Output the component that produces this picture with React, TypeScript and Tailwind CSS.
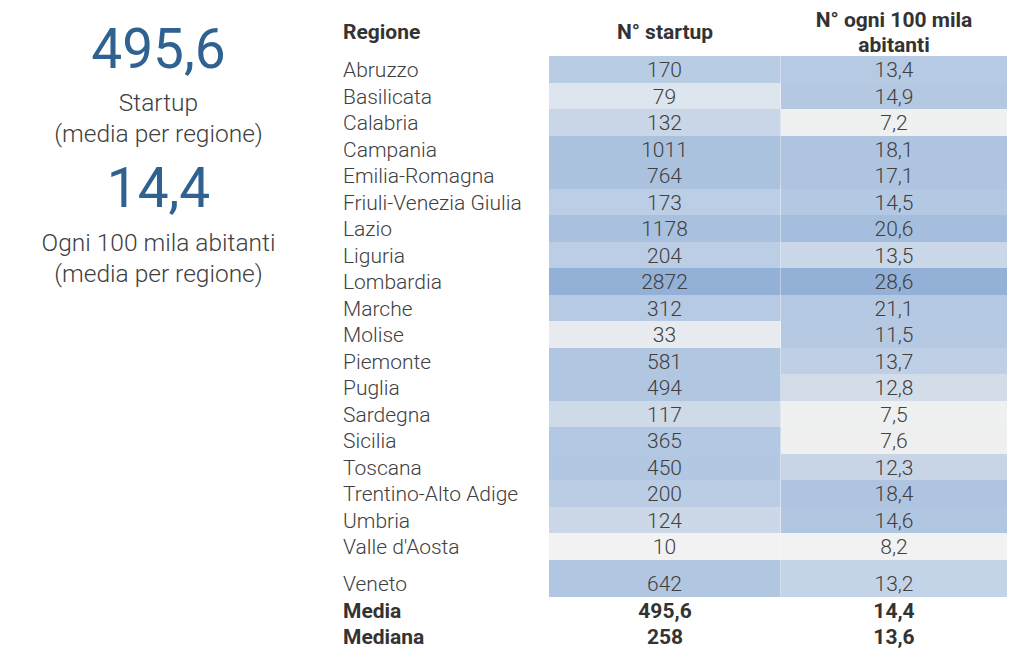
import React from 'react';

// regione, startup, colore startup, per 100 mila, colore per 100 mila
interface Riga {
  nome: string;
  startup: string;
  c1: string;
  ogni: string;
  c2: string;
}

const righe: Riga[] = [
  { nome: 'Abruzzo', startup: '170', c1: 'bg-[#b8cce4]', ogni: '13,4', c2: 'bg-[#b6cae3]' },
  { nome: 'Basilicata', startup: '79', c1: 'bg-[#dde5ef]', ogni: '14,9', c2: 'bg-[#b4c8e2]' },
  { nome: 'Calabria', startup: '132', c1: 'bg-[#c8d6e8]', ogni: '7,2', c2: 'bg-[#eff0f0]' },
  { nome: 'Campania', startup: '1011', c1: 'bg-[#abc2df]', ogni: '18,1', c2: 'bg-[#aec4e0]' },
  { nome: 'Emilia-Romagna', startup: '764', c1: 'bg-[#abc2df]', ogni: '17,1', c2: 'bg-[#aec4e0]' },
  { nome: 'Friuli-Venezia Giulia', startup: '173', c1: 'bg-[#bccee5]', ogni: '14,5', c2: 'bg-[#b3c8e2]' },
  { nome: 'Lazio', startup: '1178', c1: 'bg-[#a9c0de]', ogni: '20,6', c2: 'bg-[#a6bedd]' },
  { nome: 'Liguria', startup: '204', c1: 'bg-[#bccee5]', ogni: '13,5', c2: 'bg-[#cad7e8]' },
  { nome: 'Lombardia', startup: '2872', c1: 'bg-[#93b0d6]', ogni: '28,6', c2: 'bg-[#93b0d6]' },
  { nome: 'Marche', startup: '312', c1: 'bg-[#b6cae3]', ogni: '21,1', c2: 'bg-[#b5c9e3]' },
  { nome: 'Molise', startup: '33', c1: 'bg-[#e7ebef]', ogni: '11,5', c2: 'bg-[#b5c9e3]' },
  { nome: 'Piemonte', startup: '581', c1: 'bg-[#b1c6e1]', ogni: '13,7', c2: 'bg-[#bfd0e6]' },
  { nome: 'Puglia', startup: '494', c1: 'bg-[#b1c6e1]', ogni: '12,8', c2: 'bg-[#d3dde9]' },
  { nome: 'Sardegna', startup: '117', c1: 'bg-[#cfdae8]', ogni: '7,5', c2: 'bg-[#eff1f1]' },
  { nome: 'Sicilia', startup: '365', c1: 'bg-[#b3c8e2]', ogni: '7,6', c2: 'bg-[#efefef]' },
  { nome: 'Toscana', startup: '450', c1: 'bg-[#b2c7e2]', ogni: '12,3', c2: 'bg-[#c7d5e7]' },
  { nome: 'Trentino-Alto Adige', startup: '200', c1: 'bg-[#bacde5]', ogni: '18,4', c2: 'bg-[#aec4e0]' },
  { nome: 'Umbria', startup: '124', c1: 'bg-[#ccd8e8]', ogni: '14,6', c2: 'bg-[#b1c6e1]' },
  { nome: "Valle d'Aosta", startup: '10', c1: 'bg-[#f2f2f2]', ogni: '8,2', c2: 'bg-[#f2f2f2]' },
];

export default function App() {
  return (
    <div className="w-[1023px] h-[660px] bg-white flex font-['Roboto',sans-serif] text-[#404040] overflow-hidden">
      {/* riepilogo a sinistra */}
      <div className="w-[317px] flex flex-col items-center pt-[19px] font-light">
        <div className="text-[55px] leading-[60px] font-normal text-[#2f6290]">495,6</div>
        <div className="text-[24.5px] leading-[31px] mt-[7.5px] text-center">
          Startup
          <br />
          (media per regione)
        </div>
        <div className="text-[55px] leading-[60px] font-normal text-[#2f6290] mt-[9px]">14,4</div>
        <div className="text-[24.5px] leading-[31px] mt-[9.5px] text-center">
          Ogni 100 mila abitanti
          <br />
          (media per regione)
        </div>
      </div>

      {/* tabella */}
      <div className="ml-[26px] w-[664px] text-[21px]">
        <div className="grid grid-cols-[206px_232px_226px] h-[56px] items-start font-bold text-[#333333] leading-[25px]">
          <div className="pt-[19.5px]">Regione</div>
          <div className="text-center pt-[19.5px]">N° startup</div>
          <div className="text-center pt-[7.5px]">
            N° ogni 100 mila
            <br />
            abitanti
          </div>
        </div>

        {righe.map((r) => (
          <div key={r.nome} className="grid grid-cols-[206px_232px_226px] h-[26.5px] leading-[26px] pt-[1px] font-light">
            <div>{r.nome}</div>
            <div className={`${r.c1} text-center border-b border-r border-white/40 -mt-[1px] pt-[1px]`}>{r.startup}</div>
            <div className={`${r.c2} text-center border-b border-white/40 -mt-[1px] pt-[1px]`}>{r.ogni}</div>
          </div>
        ))}

        {/* Veneto: riga più alta */}
        <div className="grid grid-cols-[206px_232px_226px] h-[35px] leading-[26px] font-light">
          <div className="pt-[11px]">Veneto</div>
          <div className="bg-[#b1c6e1] text-center pt-[11px] border-r border-white/40">642</div>
          <div className="bg-[#c3d3e8] text-center pt-[11px]">13,2</div>
        </div>

        <div className="grid grid-cols-[206px_232px_226px] h-[26.5px] leading-[26px] font-bold text-[#333333] mt-[3px]">
          <div>Media</div>
          <div className="text-center">495,6</div>
          <div className="text-center">14,4</div>
        </div>
        <div className="grid grid-cols-[206px_232px_226px] h-[26.5px] leading-[26px] font-bold text-[#333333]">
          <div>Mediana</div>
          <div className="text-center">258</div>
          <div className="text-center">13,6</div>
        </div>
      </div>
    </div>
  );
}
